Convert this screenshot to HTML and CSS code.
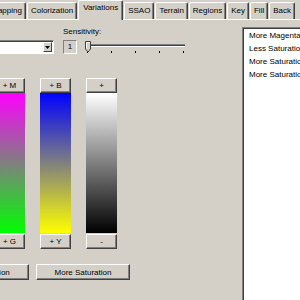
FILE: index.html
```html
<!DOCTYPE html>
<html lang="en">
<head>
    <meta charset="UTF-8">
    <title>Variations</title>
    <link rel="stylesheet" href="styles.css">
</head>
<body>
    <div class="tabs">
        <div class="tab">Bump Mapping</div>
        <div class="tab">Colorization</div>
        <div class="tab active">Variations</div>
        <div class="tab">SSAO</div>
        <div class="tab">Terrain</div>
        <div class="tab">Regions</div>
        <div class="tab">Key</div>
        <div class="tab">Fill</div>
        <div class="tab">Back</div>
    </div>

    <div class="page">
        <div class="left">
            <div class="sens-label">Sensitivity:</div>
            <div class="controls">
                <div class="combo">
                    <div class="combo-btn">
                        <svg width="5" height="3" viewBox="0 0 5 3"><path d="M0 0h5L2.5 3z" fill="#000"/></svg>
                    </div>
                </div>
                <div class="sens-value">1</div>
                <!-- trackbar -->
                <svg class="slider" width="110" height="14" viewBox="0 0 110 14">
                    <rect x="3" y="4" width="99" height="1" fill="#808080"/>
                    <rect x="3" y="5" width="99" height="1" fill="#404040"/>
                    <rect x="3" y="6" width="99" height="1" fill="#fff"/>
                    <rect x="4" y="11" width="1" height="2" fill="#000"/>
                    <rect x="28" y="11" width="1" height="2" fill="#000"/>
                    <rect x="52" y="11" width="1" height="2" fill="#000"/>
                    <rect x="76" y="11" width="1" height="2" fill="#000"/>
                    <rect x="100" y="11" width="1" height="2" fill="#000"/>
                    <path d="M2.5 1.5h5v7.5l-2.5 3l-2.5-3z" fill="#d4d0c8" stroke="#404040"/>
                    <path d="M3.5 8.5v-6h3" fill="none" stroke="#fff"/>
                </svg>
            </div>

            <div class="channels">
                <div class="channel">
                    <button class="btn">+ M</button>
                    <div class="bar bar-mg"></div>
                    <button class="btn">+ G</button>
                </div>
                <div class="channel">
                    <button class="btn">+ B</button>
                    <div class="bar bar-by"></div>
                    <button class="btn">+ Y</button>
                </div>
                <div class="channel">
                    <button class="btn">+</button>
                    <div class="bar bar-wk"></div>
                    <button class="btn">-</button>
                </div>
            </div>

            <div class="actions">
                <button class="btn wide">Less Saturation</button>
                <button class="btn wide">More Saturation</button>
            </div>
        </div>

        <div class="history">
            <div class="item">More Magenta</div>
            <div class="item">Less Saturation</div>
            <div class="item">More Saturation</div>
            <div class="item">More Saturation</div>
        </div>
    </div>
</body>
</html>
```

FILE: styles.css
```css
body {
    margin: 0;
    width: 300px;
    height: 300px;
    overflow: hidden;
    background-color: #d4d0c8;
    font-family: "Liberation Sans", Arial, sans-serif;
    font-size: 8px;
    color: #000;
}

/* tab strip */
.tabs {
    display: flex;
    justify-content: flex-end; /* strip is cut on the left */
    align-items: flex-end;
    gap: 1px;
    height: 19px;
    padding-right: 5px;
    border-bottom: 1px solid #fff;
}

.tab {
    flex-shrink: 0;
    box-sizing: border-box;
    height: 17px;
    padding: 0 3px;
    line-height: 15px;
    white-space: nowrap;
    border: 1px solid #fff;
    border-bottom: none;
    border-right-color: #404040;
    border-radius: 2px 2px 0 0;
    box-shadow: inset -1px 0 #808080;
}

.tab.active {
    height: 20px;
    margin-bottom: -1px;
    padding: 0 4px;
    line-height: 14px;
    background-color: #d4d0c8;
}

.page {
    display: flex;
}

.left {
    width: 242px;
    flex-shrink: 0;
}

.sens-label {
    margin: 7px 0 0 63px;
    line-height: 10px;
}

.controls {
    display: flex;
    align-items: flex-start;
    margin-top: 3px;
    height: 14px;
}

.combo {
    box-sizing: border-box;
    width: 100px;
    height: 14px;
    margin-left: -46px;
    padding: 1px 1px 1px 2px;
    display: flex;
    justify-content: flex-end;
    background-color: #fff;
    border: 1px solid;
    border-color: #808080 #fff #fff #808080;
    box-shadow: inset 1px 1px #404040;
}

.combo-btn {
    box-sizing: border-box;
    width: 9px;
    height: 10px;
    display: flex;
    align-items: center;
    justify-content: center;
    background-color: #d4d0c8;
    border: 1px solid;
    border-color: #fff #404040 #404040 #fff;
}

.sens-value {
    box-sizing: border-box;
    width: 14px;
    height: 14px;
    margin-left: 9px;
    text-align: center;
    line-height: 12px;
    border: 1px solid;
    border-color: #808080 #fff #fff #808080;
}

.slider {
    display: block;
    margin-left: 6px;
}

/* colour channels */
.channels {
    display: flex;
    gap: 15px;
    margin: 24px 0 0 -6px;
}

.channel {
    width: 31px;
    display: flex;
    flex-direction: column;
}

.btn {
    box-sizing: border-box;
    height: 15px;
    padding: 0;
    font: inherit;
    color: #000;
    background-color: #d4d0c8;
    border: 1px solid;
    border-color: #fff #404040 #404040 #fff;
    box-shadow: inset -1px -1px #808080;
    white-space: nowrap;
}

.bar {
    height: 140px;
    margin-bottom: 1px;
}

.bar-mg {
    background: linear-gradient(#ff00ff, #00ff00);
}

.bar-by {
    background: linear-gradient(#0000ff, #ffff00);
}

.bar-wk {
    background: linear-gradient(#ffffff, #000000);
}

.actions {
    display: flex;
    gap: 7px;
    margin: 15px 0 0 -65px;
}

.btn.wide {
    width: 94px;
    height: 16px;
    flex-shrink: 0;
}

/* history list */
.history {
    flex-shrink: 0;
    width: 100px;
    height: 290px;
    margin-top: 7px;
    padding-top: 1px;
    background-color: #fff;
    border: 1px solid;
    border-color: #808080 #fff #fff #808080;
    box-shadow: inset 1px 1px #404040;
}

.item {
    line-height: 13px;
    padding-left: 6px;
    white-space: nowrap;
}
```
